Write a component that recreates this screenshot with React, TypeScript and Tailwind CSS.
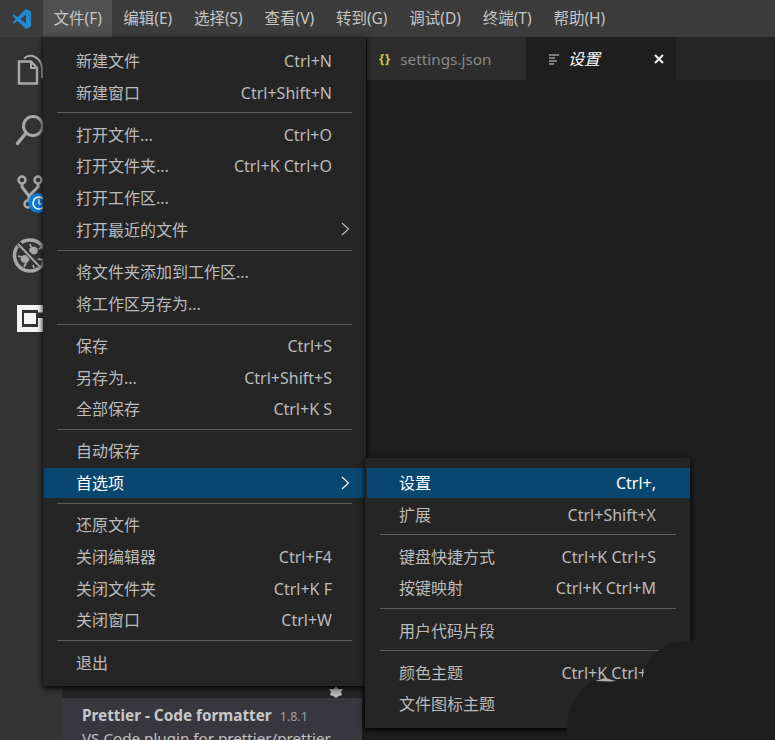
import React from 'react';

type MenuRow = { label: string; keys?: string; arrow?: boolean; active?: boolean } | 'sep';

const topMenus = ['编辑(E)', '选择(S)', '查看(V)', '转到(G)', '调试(D)', '终端(T)', '帮助(H)'];

const fileMenu: MenuRow[] = [
  { label: '新建文件', keys: 'Ctrl+N' },
  { label: '新建窗口', keys: 'Ctrl+Shift+N' },
  'sep',
  { label: '打开文件...', keys: 'Ctrl+O' },
  { label: '打开文件夹...', keys: 'Ctrl+K Ctrl+O' },
  { label: '打开工作区...' },
  { label: '打开最近的文件', arrow: true },
  'sep',
  { label: '将文件夹添加到工作区...' },
  { label: '将工作区另存为...' },
  'sep',
  { label: '保存', keys: 'Ctrl+S' },
  { label: '另存为...', keys: 'Ctrl+Shift+S' },
  { label: '全部保存', keys: 'Ctrl+K S' },
  'sep',
  { label: '自动保存' },
  { label: '首选项', arrow: true, active: true },
  'sep',
  { label: '还原文件' },
  { label: '关闭编辑器', keys: 'Ctrl+F4' },
  { label: '关闭文件夹', keys: 'Ctrl+K F' },
  { label: '关闭窗口', keys: 'Ctrl+W' },
  'sep',
  { label: '退出' },
];

const prefMenu: MenuRow[] = [
  { label: '设置', keys: 'Ctrl+,', active: true },
  { label: '扩展', keys: 'Ctrl+Shift+X' },
  'sep',
  { label: '键盘快捷方式', keys: 'Ctrl+K Ctrl+S' },
  { label: '按键映射', keys: 'Ctrl+K Ctrl+M' },
  'sep',
  { label: '用户代码片段' },
  'sep',
  { label: '颜色主题', keys: 'Ctrl+K Ctrl+T' },
  { label: '文件图标主题' },
];

function Menu({ rows }: { rows: MenuRow[] }) {
  return (
    <div className="flex flex-col">
      {rows.map((row, i) =>
        row === 'sep' ? (
          <div key={i} className="mx-[14px] mt-[4px] mb-[5.500px] h-px bg-[#5a5a5a]" />
        ) : (
          <div
            key={i}
            className={`relative flex items-center justify-between pr-[34px] text-[16px] ${
              row.active
                ? 'my-[1px] ml-[1px] h-[29.700px] bg-[#094771] pl-[32px] text-white'
                : 'h-[31.700px] pl-[33px] text-[#bbbbbb]'
            }`}
          >
            <span>{row.label}</span>
            {row.keys && <span>{row.keys}</span>}
            {row.arrow && (
              <svg className="absolute right-[16px] top-[8px]" width="9" height="14" viewBox="0 0 9 14" fill="none">
                <path d="M1 1l6.500 6L1 13" stroke="currentColor" strokeWidth="1.100" />
              </svg>
            )}
          </div>
        ),
      )}
    </div>
  );
}

function ActivityIcons() {
  return (
    <svg width="62" height="300" viewBox="0 0 62 300" fill="none" stroke="#a8a8a8" strokeWidth="2.500">
      {/* files */}
      <path d="M19 24.500h12l6 6.500v15.500H19z" />
      <path d="M31 24.500v6.500h6" strokeWidth="2" />
      <path d="M24 21.500c3-2.500 7-3.500 11-1.500 5 2.500 7 7 7 12v9" strokeWidth="2" />
      {/* search */}
      <circle cx="33" cy="89" r="9.500" strokeWidth="3" />
      <path d="M26 96l-8.500 10.500" strokeWidth="3.500" strokeLinecap="round" />
      {/* scm */}
      <circle cx="22" cy="143" r="3.500" />
      <circle cx="38" cy="143" r="3.500" />
      <circle cx="28" cy="167" r="3.500" />
      <path d="M22 147v3l7 9v5M38 147v3l-9 9" strokeWidth="3" />
      {/* debug */}
      <circle cx="30" cy="218.500" r="15.500" strokeWidth="3.500" />
      <ellipse cx="25" cy="222" rx="4.500" ry="4" fill="#a8a8a8" stroke="none" />
      <ellipse cx="33.500" cy="213.500" rx="4.500" ry="4" fill="#a8a8a8" stroke="none" />
      <path d="M18 219l4 1M26 226l-2 4M30 207l1 3M38 222l5 1M39 212l4-3M33 228l1 3" strokeWidth="1.800" />
      <path d="M18 206l22 23" stroke="#333333" strokeWidth="5" />
      <path d="M18 207l22 23" strokeWidth="2" />
      {/* extensions */}
      <path
        d="M17 268h26v7.500h-5v5.500h5v14H17z M22 273v17h16v-17z"
        fill="#f4f4f4"
        fillRule="evenodd"
        stroke="none"
      />
      <rect x="24" y="276" width="12" height="11" fill="#f4f4f4" stroke="none" />
    </svg>
  );
}

export default function App() {
  return (
    <div className="relative flex h-[740px] w-[775px] flex-col overflow-hidden bg-[#1e1e1e] font-['Noto_Sans','Noto_Sans_CJK_SC',sans-serif]">
      {/* title bar */}
      <div className="flex h-[37px] shrink-0 items-center bg-[#3c3c3c] text-[15.500px] text-[#c6c6c6]">
        <div className="flex w-[43px] justify-center">
          <svg width="22" height="22" viewBox="0 0 22 22">
            <path d="M15 1l5 2.500v15L15 21 6.500 13 3 15.500 1.500 14.500 5 11 1.500 7.500 3 6.500 6.500 9z" fill="#2489ca" />
            <path d="M15 6.500L9.500 11l5.500 4.500z" fill="#3c3c3c" />
          </svg>
        </div>
        <div className="flex h-full items-center bg-[#505050] px-[10.500px]">文件(F)</div>
        {topMenus.map(m => (
          <div key={m} className="flex h-full items-center px-[10.900px]">
            {m}
          </div>
        ))}
      </div>

      <div className="flex min-h-0 flex-1">
        {/* activity bar */}
        <div className="w-[62px] shrink-0 bg-[#333333]">
          <div className="relative">
            <ActivityIcons />
            <svg className="absolute left-[28px] top-[156px]" width="20" height="20" viewBox="0 0 20 20">
              <circle cx="10" cy="10" r="10" fill="#0e7ad1" />
              <circle cx="11" cy="10" r="6" fill="none" stroke="#ffffff" strokeWidth="1.500" />
              <path d="M11 6v5h3" fill="none" stroke="#ffffff" strokeWidth="1.200" />
            </svg>
          </div>
        </div>

        {/* side bar */}
        <div className="flex w-[300px] shrink-0 flex-col justify-end bg-[#252526]">
          <div className="flex h-[12px] shrink-0 justify-end pr-[19px]">
            <svg width="14" height="12" viewBox="0 0 14 12" fill="#b8b8b8">
              <path d="M0 3h5L7 0l2 3h5l-2 3 1 3-3 1-3 2-3-2-3-1 1-3z" />
            </svg>
          </div>
          <div className="flex h-[42px] shrink-0 flex-col bg-[#37373d] pl-[20px] pt-[6px]">
            <div className="flex items-baseline gap-[8px] whitespace-nowrap">
              <span className="text-[15.300px] font-bold text-[#c8c8c8]">Prettier - Code formatter</span>
              <span className="text-[12.500px] text-[#a0a0a0]">1.8.1</span>
            </div>
            <div className="whitespace-nowrap text-[15.200px] leading-[22px] text-[#c0c0c0]">VS Code plugin for prettier/prettier</div>
          </div>
        </div>
        <div className="w-[5px] shrink-0 bg-[#1a1a1a]" />

        {/* editor */}
        <div className="min-w-0 flex-1 bg-[#1e1e1e]">
          <div className="flex h-[43px] bg-[#252526]">
            <div className="flex w-[159px] items-center gap-[9px] bg-[#2d2d2d] pl-[12px] text-[15.300px] text-[#8a8a8a]">
              <span className="text-[13px] font-bold tracking-[1px] text-[#cbcb41]">{'{}'}</span>
              <span className="pt-[2px]">settings.json</span>
            </div>
            <div className="flex w-[150px] items-center bg-[#1e1e1e] pl-[22px] text-[16px] text-white">
              <svg width="12" height="12" viewBox="0 0 12 12" stroke="#d8d8d8" strokeWidth="1">
                <path d="M1 2h10M1 5h6M1 8h8M1 11h5" />
              </svg>
              <span className="ml-[8px] italic">设置</span>
              <svg className="ml-[54px]" width="10" height="10" viewBox="0 0 10 10" stroke="#f0f0f0" strokeWidth="2">
                <path d="M1 1l8 8M9 1l-8 8" />
              </svg>
            </div>
          </div>
        </div>
      </div>

      {/* file menu */}
      <div className="absolute left-[43px] top-[37px] w-[323px] bg-[#252526] pb-[7.400px] pt-[8px] shadow-[0_2px_6px_#000000]">
        <Menu rows={fileMenu} />
      </div>

      {/* preferences submenu */}
      <div className="absolute left-[365px] top-[458px] w-[325px] bg-[#252526] pb-[7.600px] pl-[1px] pt-[9px] shadow-[0_2px_6px_#000000]">
        <Menu rows={prefMenu} />
      </div>

      {/* retouched corner of the screenshot */}
      <svg className="absolute left-[565px] top-[638px]" width="210" height="102" viewBox="0 0 210 102">
        <path d="M3 102C0 82 4 62 28 42L78 42C78 30 84 14 108 5L125 3L210 0v102z" fill="#1e1e1e" />
        <path d="M30 43l10-3 11 3-5 0.500z" fill="#b0b0b0" />
      </svg>
    </div>
  );
}
